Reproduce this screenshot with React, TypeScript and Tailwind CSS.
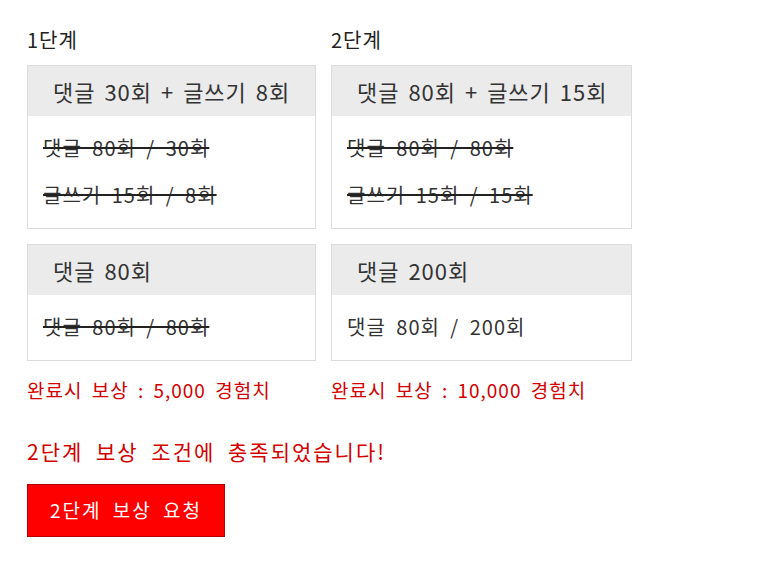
import type { ReactNode } from "react";

type Quest = {
  title: string;
  lines: { text: string; done: boolean }[];
};

type Stage = {
  label: string;
  width: string;
  quests: Quest[];
  reward: string;
};

const stages: Stage[] = [
  {
    label: "1단계",
    width: "w-[289px]",
    quests: [
      {
        title: "댓글 30회 + 글쓰기 8회",
        lines: [
          { text: "댓글 80회 / 30회", done: true },
          { text: "글쓰기 15회 / 8회", done: true },
        ],
      },
      {
        title: "댓글 80회",
        lines: [{ text: "댓글 80회 / 80회", done: true }],
      },
    ],
    reward: "완료시 보상 : 5,000 경험치",
  },
  {
    label: "2단계",
    width: "w-[301px]",
    quests: [
      {
        title: "댓글 80회 + 글쓰기 15회",
        lines: [
          { text: "댓글 80회 / 80회", done: true },
          { text: "글쓰기 15회 / 15회", done: true },
        ],
      },
      {
        title: "댓글 200회",
        lines: [{ text: "댓글 80회 / 200회", done: false }],
      },
    ],
    reward: "완료시 보상 : 10,000 경험치",
  },
];

function QuestCard({ quest, children }: { quest: Quest; children?: ReactNode }) {
  return (
    <div className="border border-[#dcdcdc] bg-white">
      <div className="h-[50px] bg-[#ebebeb] px-[25px] flex items-center text-[22px] text-[#333] tracking-[1px] [word-spacing:3px] whitespace-nowrap">
        {quest.title}
      </div>
      <div className="pl-[15px] pt-[17px] pb-[18px] flex flex-col gap-[17px]">
        {quest.lines.map((line) => (
          <div
            key={line.text}
            className={
              line.done
                ? "h-[30px] leading-[30px] text-[20px] text-[#333] tracking-[1px] [word-spacing:5px] line-through decoration-2 decoration-[#222] whitespace-nowrap"
                : "h-[30px] leading-[30px] text-[20px] text-[#333] tracking-[1px] [word-spacing:5px] whitespace-nowrap"
            }
          >
            {line.text}
          </div>
        ))}
      </div>
      {children}
    </div>
  );
}

export default function App() {
  return (
    <div
      className="min-h-[576px] bg-white pl-[27px] pt-[25px]"
      style={{ fontFamily: '"Noto Sans CJK KR", "Noto Sans", sans-serif' }}
    >
      <div className="flex gap-[15px]">
        {stages.map((stage) => (
          <div key={stage.label} className={stage.width}>
            <div className="h-[30px] leading-[30px] text-[20px] text-[#222] tracking-[1px] mb-[10px]">
              {stage.label}
            </div>
            <div className="flex flex-col gap-[15px]">
              {stage.quests.map((quest) => (
                <QuestCard key={quest.title} quest={quest} />
              ))}
            </div>
            <div className="mt-[14px] h-[30px] leading-[30px] text-[19px] text-[#d40000] tracking-[1px] [word-spacing:4px] whitespace-nowrap">
              {stage.reward}
            </div>
          </div>
        ))}
      </div>

      <div className="mt-[31px] h-[30px] leading-[30px] text-[21px] text-[#d40000] tracking-[2px] [word-spacing:6px]">
        2단계 보상 조건에 충족되었습니다!
      </div>

      <button className="mt-[18px] w-[198px] h-[53px] bg-[#ff0000] border border-[#b30000] text-white text-[19px] tracking-[2px] [word-spacing:5px]">
        2단계 보상 요청
      </button>
    </div>
  );
}
